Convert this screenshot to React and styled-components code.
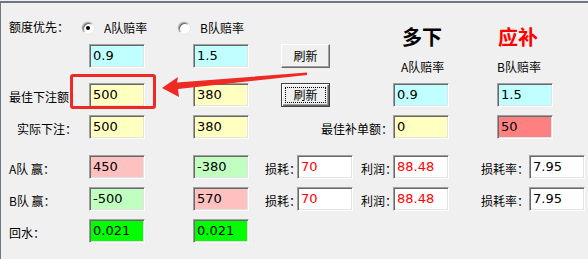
import React from 'react'
import styled, { createGlobalStyle, css } from 'styled-components'

const cn = '"Noto Sans CJK SC", "Noto Sans", sans-serif'

const GlobalStyle = createGlobalStyle`
  html, body {
    margin: 0;
    padding: 0;
    background: #f0f0f0;
  }
  body {
    width: 588px;
    height: 259px;
    overflow: hidden;
  }
`

const Window = styled.div`
  position: relative;
  box-sizing: border-box;
  width: 588px;
  height: 258px;
  margin-top: 1px;
  padding-top: 11px;
  background: #f0f0f0;
  border-top: 2px solid #6f7782;
  border-left: 1px solid #6f7782;
  font-family: ${cn};
  font-size: 12px;
  color: #000;
`

const Top = styled.div`
  display: flex;
  height: 61px;
`

const LeftCol = styled.div`
  width: 400px;
  flex: none;
`

const RightCol = styled.div`
  display: grid;
  grid-template-columns: 96px 96px;
  grid-template-rows: 24px 16px;
  row-gap: 10px;
  padding-top: 11px;
`

const Title = styled.div`
  font-size: 20px;
  font-weight: 700;
  line-height: 24px;
  padding-left: 1px;
  color: ${p => p.$red ? '#ff0000' : '#000'};
`

const SubLabel = styled.div`
  line-height: 16px;
`

const Row = styled.div`
  display: flex;
  align-items: flex-start;
  height: 24px;
  margin-top: ${p => p.$gap || 0}px;
`

const RadioRow = styled.div`
  display: flex;
  align-items: center;
  height: 24px;
  padding-top: 1px;
`

const Label = styled.div`
  flex: none;
  box-sizing: border-box;
  width: ${p => p.$w}px;
  padding-left: ${p => p.$pl || 0}px;
  padding-top: 2px;
  line-height: 24px;
  white-space: nowrap;
  text-align: ${p => p.$right ? 'right' : 'left'};
`

const Option = styled.label`
  display: flex;
  align-items: center;
  width: ${p => p.$w}px;
  flex: none;
  white-space: nowrap;
`

const Radio = styled.span`
  box-sizing: border-box;
  width: 12px;
  height: 12px;
  margin-top: 2px;
  margin-right: 10px;
  border-radius: 50%;
  background: #fff;
  border: 1px solid;
  border-color: #a0a0a0 #fff #fff #a0a0a0;
  box-shadow: inset 1px 1px 0 #696969, 0 0 0 0.5px #d8d8d8;
  display: flex;
  align-items: center;
  justify-content: center;
  &::after {
    content: '';
    width: 4px;
    height: 4px;
    border-radius: 50%;
    background: ${p => p.$on ? '#000' : 'transparent'};
  }
`

const Field = styled.div`
  flex: none;
  box-sizing: border-box;
  width: 56px;
  height: 24px;
  margin-left: ${p => p.$ml || 0}px;
  padding: 3px 0 0 3px;
  background: ${p => p.$bg || '#fff'};
  color: ${p => p.$fg || '#000'};
  border: 1px solid;
  border-color: #a0a0a0 #fff #fff #a0a0a0;
  box-shadow: inset 1px 1px 0 #696969, inset -1px -1px 0 #e3e3e3;
  font: 13px/15px "DejaVu Sans", sans-serif;
  white-space: nowrap;
  overflow: hidden;
`

const Button = styled.button`
  position: relative;
  flex: none;
  box-sizing: border-box;
  width: 49px;
  height: 24px;
  margin-left: ${p => p.$ml || 0}px;
  padding: 0;
  background: #f0f0f0;
  border: 1px solid;
  border-color: #fff #696969 #696969 #fff;
  box-shadow: inset -1px -1px 0 #a0a0a0;
  font-family: ${cn};
  font-size: 12px;
  line-height: 1;
  color: #000;
  ${p => p.$focus && css`
    border: 1px solid #404040;
    box-shadow: inset 1px 1px 0 #fff, inset -1px -1px 0 #696969, inset -2px -2px 0 #a0a0a0;
    &::after {
      content: '';
      position: absolute;
      left: 3px;
      top: 3px;
      right: 3px;
      bottom: 3px;
      border: 1px dotted #000;
    }
  `}
`

const Highlight = styled.div`
  position: absolute;
  left: 69px;
  top: 71px;
  width: 86px;
  height: 35px;
  box-sizing: border-box;
  border: 3px solid #ee2a24;
  border-radius: 3px;
  pointer-events: none;
`

const Arrow = styled.svg`
  position: absolute;
  left: -1px;
  top: -3px;
  pointer-events: none;
`

export default function App() {
  return (
    <>
      <GlobalStyle />
      <Window>
        <Top>
          <LeftCol>
            <RadioRow>
              <Label $w={81} $pl={8} style={{ paddingTop: 0 }}>额度优先：</Label>
              <Option $w={96}><Radio $on />A队赔率</Option>
              <Option $w={96}><Radio />B队赔率</Option>
            </RadioRow>
            <Row $gap={5}>
              <Label $w={88} />
              <Field $bg="#c0ffff">0.9</Field>
              <Field $bg="#c0ffff" $ml={48}>1.5</Field>
              <Button $ml={32}>刷新</Button>
            </Row>
          </LeftCol>
          <RightCol>
            <Title>多下</Title>
            <Title $red>应补</Title>
            <SubLabel>A队赔率</SubLabel>
            <SubLabel>B队赔率</SubLabel>
          </RightCol>
        </Top>

        <Row $gap={8}>
          <Label $w={88} $pl={8}>最佳下注额：</Label>
          <Field $bg="#ffffc0">500</Field>
          <Field $bg="#ffffc0" $ml={48}>380</Field>
          <Button $ml={32} $focus>刷新</Button>
          <Field $bg="#c0ffff" $ml={63}>0.9</Field>
          <Field $bg="#c0ffff" $ml={48}>1.5</Field>
        </Row>

        <Row $gap={8}>
          <Label $w={88} $pl={16}>实际下注：</Label>
          <Field $bg="#ffffc0">500</Field>
          <Field $bg="#ffffc0" $ml={48}>380</Field>
          <Label $w={144} $right>最佳补单额：</Label>
          <Field $bg="#ffffc0">0</Field>
          <Field $bg="#ff8080" $ml={48}>50</Field>
        </Row>

        <Row $gap={16}>
          <Label $w={88} $pl={8}>A队 赢：</Label>
          <Field $bg="#ffc0c0">450</Field>
          <Field $bg="#c0ffc0" $ml={48}>-380</Field>
          <Label $w={48} $pl={16}>损耗：</Label>
          <Field $fg="#ff0000">70</Field>
          <Label $w={40} $pl={8}>利润：</Label>
          <Field $fg="#ff0000">88.48</Field>
          <Label $w={80} $pl={32}>损耗率：</Label>
          <Field>7.95</Field>
        </Row>

        <Row $gap={8}>
          <Label $w={88} $pl={8}>B队 赢：</Label>
          <Field $bg="#c0ffc0">-500</Field>
          <Field $bg="#ffc0c0" $ml={48}>570</Field>
          <Label $w={48} $pl={16}>损耗：</Label>
          <Field $fg="#ff0000">70</Field>
          <Label $w={40} $pl={8}>利润：</Label>
          <Field $fg="#ff0000">88.48</Field>
          <Label $w={80} $pl={32}>损耗率：</Label>
          <Field>7.95</Field>
        </Row>

        <Row $gap={8}>
          <Label $w={88} $pl={8}>回水：</Label>
          <Field $bg="#00ff00">0.021</Field>
          <Field $bg="#00ff00" $ml={48}>0.021</Field>
        </Row>

        <Highlight />
        <Arrow width="588" height="259" viewBox="0 0 588 259">
          <polygon
            points="162,88 178,77 177,82.5 307,72.5 307,75 178,89 179,97"
            fill="#ee2a24"
          />
        </Arrow>
      </Window>
    </>
  )
}
